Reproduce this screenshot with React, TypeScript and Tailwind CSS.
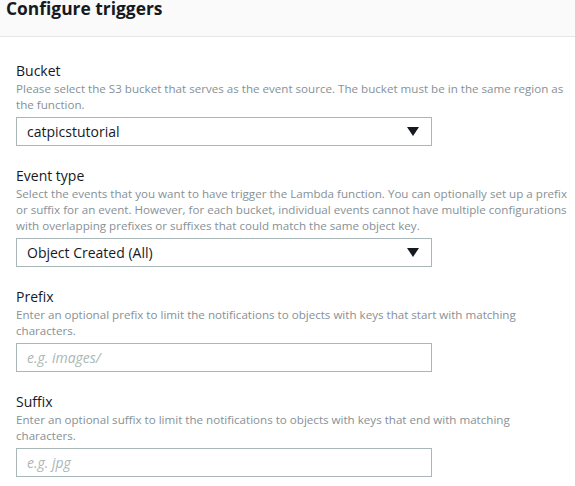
import React from "react";

// help text is split where the console wraps it
const fields = [
  {
    label: "Bucket",
    help: [
      "Please select the S3 bucket that serves as the event source. The bucket must be in the same region as",
      "the function.",
    ],
    kind: "select",
    value: "catpicstutorial",
  },
  {
    label: "Event type",
    help: [
      "Select the events that you want to have trigger the Lambda function. You can optionally set up a prefix",
      "or suffix for an event. However, for each bucket, individual events cannot have multiple configurations",
      "with overlapping prefixes or suffixes that could match the same object key.",
    ],
    kind: "select",
    value: "Object Created (All)",
  },
  {
    label: "Prefix",
    help: [
      "Enter an optional prefix to limit the notifications to objects with keys that start with matching",
      "characters.",
    ],
    kind: "input",
    value: "e.g. images/",
  },
  {
    label: "Suffix",
    help: [
      "Enter an optional suffix to limit the notifications to objects with keys that end with matching",
      "characters.",
    ],
    kind: "input",
    value: "e.g. jpg",
  },
];

const App = () => {
  return (
    <div className="h-[486px] w-[575px] overflow-hidden bg-white font-['Open_Sans',sans-serif] text-[#333]">
      {/* header */}
      <div className="h-[37px] border-b border-[#e6e6e6] bg-[#fafafa] px-[6px]">
        <h1 className="text-[17.4px] leading-[17px] font-bold text-[#16191f]">
          Configure triggers
        </h1>
      </div>

      <div className="flex flex-col gap-[20px] px-[16px] pt-[24px]">
        {fields.map((f, i) => (
          <div key={i} className="flex flex-col">
            <label className="text-[14px] leading-[20px] text-[#16191f]">
              {f.label}
            </label>
            <div className="text-[11.6px] leading-[16px] whitespace-nowrap text-[#879196]">
              {f.help.map((line, j) => (
                <div key={j}>{line}</div>
              ))}
            </div>
            {f.kind === "select" ? (
              <div className="mt-[4px] flex h-[29px] w-[416px] items-center justify-between border border-[#aab7b8] px-[10px]">
                <span className="text-[14px] text-[#16191f]">{f.value}</span>
                <svg width="12" height="9" viewBox="0 0 12 9" className="mr-[2px]">
                  <path d="M0 0 H12 L6 9 Z" fill="#16191f" />
                </svg>
              </div>
            ) : (
              <div className="mt-[4px] flex h-[29px] w-[416px] items-center border border-[#aab7b8] px-[10px]">
                <span className="text-[14px] italic text-[#aab7b8]">
                  {f.value}
                </span>
              </div>
            )}
          </div>
        ))}
      </div>
    </div>
  );
};

export default App;
